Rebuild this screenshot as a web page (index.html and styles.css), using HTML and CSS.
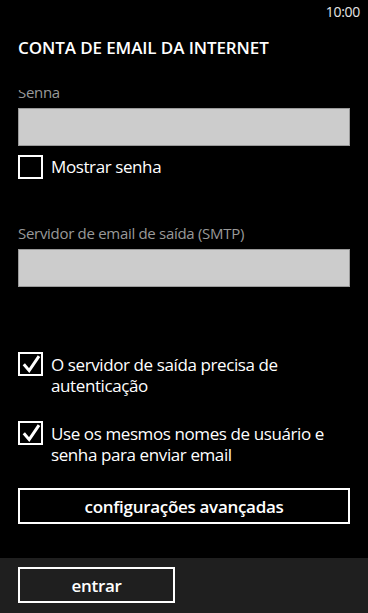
FILE: index.html
```html
<!DOCTYPE html>
<html lang="pt">
<head>
<meta charset="utf-8">
<title>Conta de email da internet</title>
<link rel="stylesheet" href="styles.css">
</head>
<body>
<div class="phone">
  <div class="status"><span class="time">10:00</span></div>
  <div class="header"><h1 class="title">CONTA DE EMAIL DA INTERNET</h1></div>
  <div class="viewport">
    <div class="form">
      <div class="label label-first">Senha</div>
      <div class="textbox"></div>
      <div class="check-row row-show">
        <span class="checkbox"></span>
        <span class="check-text">Mostrar senha</span>
      </div>
      <div class="label label-smtp">Servidor de email de saída (SMTP)</div>
      <div class="textbox"></div>
      <div class="check-row row-auth">
        <span class="checkbox">
          <svg class="tick" viewBox="0 0 24 24"><path d="M4.8 12.2 L10.2 18.6 L20 4.2"/></svg>
        </span>
        <span class="check-text">O servidor de saída precisa de autenticação</span>
      </div>
      <div class="check-row row-same">
        <span class="checkbox">
          <svg class="tick" viewBox="0 0 24 24"><path d="M4.8 12.2 L10.2 18.6 L20 4.2"/></svg>
        </span>
        <span class="check-text">Use os mesmos nomes de usuário e senha para enviar email</span>
      </div>
      <div class="button button-wide">configurações avançadas</div>
    </div>
  </div>
  <div class="appbar">
    <div class="button button-enter">entrar</div>
  </div>
</div>
</body>
</html>
```
FILE: styles.css
```css
html, body {
  margin: 0;
  padding: 0;
  background: #000;
}
body {
  font-family: "Open Sans", "Noto Sans", sans-serif;
  color: #fff;
}
.phone {
  width: 368px;
  height: 613px;
  display: flex;
  flex-direction: column;
  overflow: hidden;
  background: #000;
}
.status {
  height: 24px;
  display: flex;
  justify-content: flex-end;
  align-items: center;
  padding-right: 8px;
  flex: none;
}
.time {
  font-size: 14px;
  line-height: 24px;
  color: #e6e6e6;
  letter-spacing: -0.3px;
}
.header {
  height: 66px;
  padding: 12px 0 0 18px;
  box-sizing: border-box;
  flex: none;
}
.title {
  margin: 0;
  font-size: 17px;
  font-weight: 600;
  line-height: 24px;
  letter-spacing: -0.1px;
}
.viewport {
  flex: 1;
  overflow: hidden;
  padding: 0 18px 0 18px;
}
.form {
  margin-top: -8px;
  display: flex;
  flex-direction: column;
}
.label {
  font-size: 15px;
  line-height: 20px;
  color: #999;
  margin-bottom: 6px;
  letter-spacing: -0.3px;
}
.label-smtp {
  margin-top: 44px;
}
.textbox {
  height: 38px;
  background: #ccc;
  border: 1px solid #9a9a9a;
  box-sizing: border-box;
}
.check-row {
  display: flex;
  align-items: flex-start;
  gap: 8px;
}
.row-show { margin-top: 9px; }
.row-auth { margin-top: 65px; }
.row-same { margin-top: 25px; }
.checkbox {
  flex: none;
  width: 25px;
  height: 24px;
  border: 2px solid #fff;
  box-sizing: border-box;
  display: flex;
  align-items: center;
  justify-content: center;
}
.tick {
  width: 24px;
  height: 24px;
  flex: none;
  margin: -2px;
}
.tick path {
  fill: none;
  stroke: #fff;
  stroke-width: 3;
  stroke-linecap: butt;
  stroke-linejoin: miter;
}
.check-text {
  font-size: 17px;
  line-height: 21px;
  padding-top: 2px;
  letter-spacing: -0.4px;
}
.row-show .check-text {
  line-height: 24px;
  padding-top: 0;
}
.button {
  height: 36px;
  border: 2px solid #fff;
  box-sizing: border-box;
  display: flex;
  align-items: center;
  justify-content: center;
  font-size: 17px;
  font-weight: 600;
  letter-spacing: -0.3px;
}
.button-wide {
  margin-top: 23px;
}
.appbar {
  height: 55px;
  flex: none;
  background: #1f1f1f;
  padding: 9px 0 0 18px;
  box-sizing: border-box;
}
.button-enter {
  width: 157px;
}
```
